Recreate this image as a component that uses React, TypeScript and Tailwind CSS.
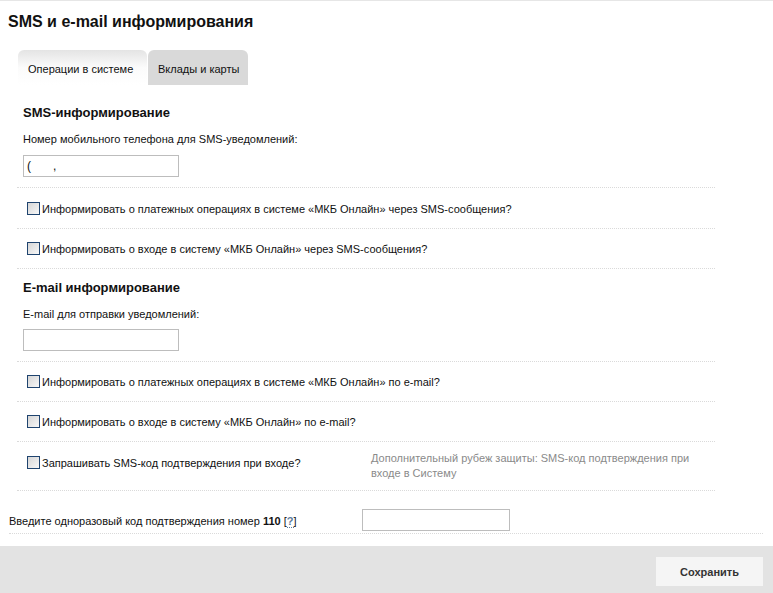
import React from "react";

function Checkbox() {
  return (
    <span className="inline-block w-[13px] h-[13px] shrink-0 border border-[#1f446f] bg-gradient-to-br from-[#d6d6d6] to-[#f7f7f7]" />
  );
}

function CheckRow({ label }: { label: string }) {
  return (
    <div className="h-[40px] flex items-center border-b border-dotted border-[#dadada] pl-[10px]">
      <Checkbox />
      <span className="ml-[2px] pt-[1px]">{label}</span>
    </div>
  );
}

export default function App() {
  return (
    <div className="w-[773px] h-[593px] flex flex-col bg-white border-t border-[#e6e6e6] text-[11px] leading-[14px] text-[#111] font-['Liberation_Sans',Arial,sans-serif]">
      <div className="flex-1 flex flex-col">
        <h1 className="ml-2 mt-[11px] text-[16px] leading-[20px] font-bold text-[#111]">
          SMS и e-mail информирования
        </h1>

        <div className="ml-[18px] mt-[18px] h-[35px] flex">
          <div className="w-[129px] h-full rounded-t-[6px] bg-gradient-to-b from-[#e4e4e4] via-[#fbfbfb] to-white flex items-center pl-[10px] pt-[2px]">
            Операции в системе
          </div>
          <div className="ml-[1px] w-[100px] h-full rounded-t-[6px] bg-[#d9d9d9] flex items-center pl-[10px] pt-[2px]">
            Вклады и карты
          </div>
        </div>

        <div className="ml-[17px] w-[698px] flex flex-col">
          {/* SMS */}
          <div className="mt-[20px] pl-[6px] text-[13px] leading-[16px] font-bold">SMS-информирование</div>
          <div className="mt-[11px] pl-[6px]">Номер мобильного телефона для SMS-уведомлений:</div>
          <div className="pl-[6px] pt-[9px] pb-[10px] border-b border-dotted border-[#dadada]">
            <div className="w-[156px] h-[22px] border border-[#bdbdbd] bg-white flex items-center pl-[3px] text-[12px]">
              <span>(</span>
              <span className="ml-[22px]">,</span>
            </div>
          </div>
          <div className="pt-[1px]" />
          <CheckRow label="Информировать о платежных операциях в системе «МКБ Онлайн» через SMS-сообщения?" />
          <CheckRow label="Информировать о входе в систему «МКБ Онлайн» через SMS-сообщения?" />

          {/* E-mail */}
          <div className="mt-[11px] pl-[6px] text-[13px] leading-[16px] font-bold">E-mail информирование</div>
          <div className="mt-[11px] pl-[6px]">E-mail для отправки уведомлений:</div>
          <div className="pl-[6px] pt-[8px] pb-[10px] border-b border-dotted border-[#dadada]">
            <div className="w-[156px] h-[22px] border border-[#bdbdbd] bg-white" />
          </div>
          <CheckRow label="Информировать о платежных операциях в системе «МКБ Онлайн» по e-mail?" />
          <CheckRow label="Информировать о входе в систему «МКБ Онлайн» по e-mail?" />
          <div className="h-[49px] flex items-start border-b border-dotted border-[#dadada] pl-[10px] pt-[13px]">
            <div className="w-[344px] flex items-center">
              <Checkbox />
              <span className="ml-[2px] pt-[1px]">Запрашивать SMS-код подтверждения при входе?</span>
            </div>
            <div className="w-[335px] text-[#8a8a8a] leading-[15px] -mt-[4px]">
              Дополнительный рубеж защиты: SMS-код подтверждения при входе в Систему
            </div>
          </div>
        </div>

        <div className="ml-[9px] w-[754px] mt-[18px] pb-[2px] flex items-center border-b border-dotted border-[#dadada]">
          <div className="w-[353px] pt-[1px]">
            Введите одноразовый код подтверждения номер <b>110</b> [
            <span className="text-[#5b7b9b] font-bold border-b border-dotted border-[#5b7b9b]">?</span>]
          </div>
          <div className="w-[148px] h-[22px] border border-[#bdbdbd] bg-white" />
        </div>
      </div>

      <div className="h-[47px] bg-[#e3e3e3] flex items-start justify-end pr-[10px] pt-[11px]">
        <button className="w-[107px] h-[29px] bg-[#f5f5f5] text-[#333] font-bold text-[11px]">
          Сохранить
        </button>
      </div>
    </div>
  );
}
